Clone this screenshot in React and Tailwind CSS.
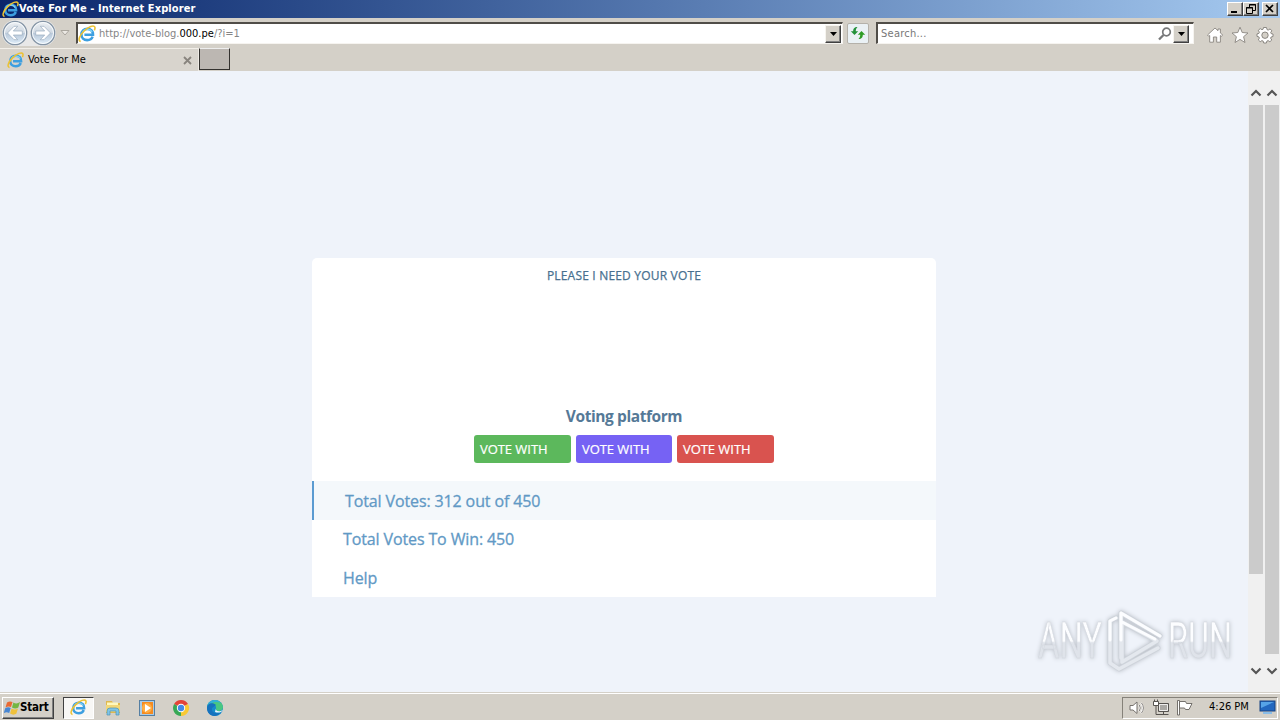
import React from 'react';

const EdgeE = ({ className }) => (
  <svg viewBox="0 0 18 18" className={className} fill="none">
    <path d="M14.6 11.6C13.7 14 11.6 15.1 9.2 15.1C5.8 15.1 3.4 12.8 3.4 9.5C3.4 6.2 5.9 3.9 9.3 3.9C12.9 3.9 15.2 6.2 15 9.8H6.4" stroke="#3d9fe0" strokeWidth="2.6" />
    <path d="M4.3 8.5C5 5.7 7 4.3 9.3 4.3C11.6 4.3 13.2 5.4 14 7" stroke="#7fd0f5" strokeWidth="1.4" />
    <path d="M2.7 16.4C-.4 15.8 1.4 10.6 5.8 6.2C10.5 1.5 15.8-.3 16.8 2C17.2 3 16.9 4.2 16.3 5.4" stroke="#ecc232" strokeWidth="1.6" />
  </svg>
);

const NavArrow = ({ flip }) => (
  <svg viewBox="0 0 26 26" className={`h-[26px] w-[26px] ${flip ? '-scale-x-100' : ''}`}>
    <defs>
      <linearGradient id="orb" x1="0" y1="0" x2="0" y2="1">
        <stop offset="0" stopColor="#eef1f4" />
        <stop offset=".48" stopColor="#cfd8e2" />
        <stop offset=".5" stopColor="#b8c7d8" />
        <stop offset="1" stopColor="#dfeefa" />
      </linearGradient>
    </defs>
    <circle cx="13" cy="13" r="11.7" fill="url(#orb)" stroke="#8494a5" strokeWidth="1.3" />
    <circle cx="13" cy="13" r="10.5" fill="none" stroke="#f8fbfd" />
    <path d="M5.5 13L12 6.3H15.7L11.3 11H20.3V15H11.3L15.7 19.7H12Z" fill="#fff" stroke="#9aacbf" strokeWidth=".7" />
  </svg>
);

const DropButton = () => (
  <div className="flex h-[18px] w-4 items-center justify-center border border-t-[#f6f4ef] border-r-[#404040] border-b-[#404040] border-l-[#f6f4ef] bg-[#d4d0c8] shadow-[inset_-1px_-1px_#808080]">
    <svg viewBox="0 0 7 4" className="h-1 w-[7px]"><path d="M0 0H7L3.5 4Z" fill="#000" /></svg>
  </div>
);

const WindowButton = ({ children }) => (
  <div className="h-[14px] w-4 border border-t-white border-r-[#404040] border-b-[#404040] border-l-white bg-[#d4d0c8] shadow-[inset_-1px_-1px_#808080]">
    <svg viewBox="0 0 14 12" className="h-3 w-[14px]" fill="none" stroke="#000">{children}</svg>
  </div>
);

const TitleBar = () => (
  <div className="flex h-[18px] items-center bg-linear-to-r from-[#0a246a] to-[#a6caf0] pr-[2px] pl-[2px]">
    <EdgeE className="h-[17px] w-[17px]" />
    <span className="font-['DejaVu_Sans_Condensed','DejaVu_Sans',sans-serif] text-[11px] leading-[18px] font-bold tracking-[0.09px] whitespace-nowrap text-white">Vote For Me - Internet Explorer</span>
    <div className="ml-auto flex">
      <WindowButton><path d="M3 9H9" strokeWidth="2" /></WindowButton>
      <WindowButton><path d="M5.5 4V1.5H11.5V7.5H9M5 2H12M2.5 4.5H8.5V10.5H2.5ZM2 5H9" /></WindowButton>
      <div className="w-[3px]" />
      <WindowButton><path d="M3 2L10 9M10 2L3 9" strokeWidth="1.7" /></WindowButton>
    </div>
  </div>
);

const AddressBar = () => (
  <div className="flex h-[30px] items-center pl-[2px]">
    <div className="flex rounded-full bg-[#e8e8e8]">
      <NavArrow />
      <div className="ml-[2px]"><NavArrow flip /></div>
    </div>
    <svg viewBox="0 0 9 6" className="ml-[4px] h-[6px] w-[10px]"><path d="M.5 .5H8.5L4.5 5Z" fill="#ece9e4" stroke="#aaa69e" /></svg>
    <div className="ml-[6px] flex h-[22px] w-[767px] items-center border border-t-2 border-l-2 border-t-[#504d48] border-r-[#f6f4f0] border-b-[#f6f4f0] border-l-[#504d48] bg-white">
      <EdgeE className="h-[18px] w-[18px]" />
      <span className="mt-[2px] ml-[3px] font-['DejaVu_Sans_Condensed','DejaVu_Sans',sans-serif] text-[11px] tracking-[0.01px] whitespace-nowrap text-[#858585]">
        http://vote-blog.<span className="text-black">000.pe</span>/?i=1
      </span>
      <div className="mr-[1px] ml-auto"><DropButton /></div>
    </div>
    <div className="ml-[4px] flex h-[21px] w-[22px] items-center justify-center rounded-[2px] border border-[#b4b1aa] bg-[#eaf1f5]">
      <svg viewBox="0 0 16 14" className="h-[14px] w-4">
        <path d="M7.5 1C4.2 1 3.2 2.7 3.2 5.2H.8L4.5 9L8.2 5.2H5.8C5.8 3.4 6.1 2.4 7.5 1Z" fill="#23913a" />
        <path d="M8.5 13C11.8 13 12.8 11.3 12.8 8.8H15.2L11.5 5L7.8 8.8H10.2C10.2 10.6 9.9 11.6 8.5 13Z" fill="#2f9c25" />
      </svg>
    </div>
    <div className="ml-[7px] flex h-[22px] w-[318px] items-center border border-t-2 border-l-2 border-t-[#504d48] border-r-[#f6f4f0] border-b-[#f6f4f0] border-l-[#504d48] bg-white pr-1">
      <span className="mt-[2px] ml-[3px] font-['DejaVu_Sans_Condensed','DejaVu_Sans',sans-serif] text-[11px] tracking-[0.25px] text-[#777]">Search...</span>
      <svg viewBox="0 0 14 14" className="mr-[1px] ml-auto h-[14px] w-[14px]" fill="none" stroke="#777879">
        <circle cx="8.5" cy="5" r="3.8" strokeWidth="1.7" /><path d="M5.5 8L1 12.5" strokeWidth="2.3" />
      </svg>
      <DropButton />
    </div>
    <div className="mt-[3px] ml-[12px] flex gap-[7px]">
      <svg viewBox="0 0 18 18" className="h-[18px] w-[18px]" fill="#fff" stroke="#89857f" strokeWidth=".9" strokeLinejoin="round">
        <path d="M1.5 9L9 2L12 4.7V3H14.4V7L16.7 9L15.3 10.3L14.4 9.5V16.2H10.7V11H7.4V16.2H3.7V9.5L2.8 10.3Z" />
      </svg>
      <svg viewBox="0 0 18 18" className="h-[18px] w-[18px]" fill="#fff" stroke="#89857f" strokeWidth=".9" strokeLinejoin="round">
        <path d="M9 1.2L11.2 6.5L17 7L12.6 10.7L14 16.5L9 13.4L4 16.5L5.4 10.7L1 7L6.8 6.5Z" />
      </svg>
      <svg viewBox="0 0 18 18" className="h-[18px] w-[18px]" fill="#fff" stroke="#817e78" strokeWidth=".9" strokeLinejoin="round">
        <path d="M7.5 1.5H10.5L11 3.6L12.2 4.1L14.1 2.9L15.8 4.8L14.7 6.5L15.1 7.6L17 8V10.5L15.1 11L14.6 12.2L15.8 14L13.9 15.7L12.1 14.6L10.9 15.1L10.4 17H7.7L7.2 15.1L5.9 14.6L4.2 15.7L2.3 13.9L3.4 12.1L2.9 10.9L1 10.4V7.9L2.9 7.4L3.4 6.2L2.3 4.4L4.2 2.6L6 3.7L7.1 3.2Z" />
        <circle cx="9" cy="9.2" r="3.2" fill="#d4d0c8" />
      </svg>
    </div>
  </div>
);

const TabStrip = () => (
  <div className="flex h-[23px] items-start">
    <div className="flex h-[23px] w-[199px] items-center border-t border-r border-t-[#f2efe9] border-r-[#eeeae4] bg-[#d8d4cd] pl-[7px]">
      <EdgeE className="h-[17px] w-[17px]" />
      <span className="mt-[1px] ml-[4px] font-['DejaVu_Sans_Condensed','DejaVu_Sans',sans-serif] text-[11px] tracking-[-0.05px] text-black">Vote For Me</span>
      <svg viewBox="0 0 9 9" className="mr-[6px] ml-auto h-[9px] w-[9px]"><path d="M1 1L8 8M8 1L1 8" stroke="#88847e" strokeWidth="1.8" /></svg>
    </div>
    <div className="h-[22px] w-[31px] border border-t-[#eee] border-r-[#33312e] border-b-[#33312e] border-l-[#33312e] bg-[#bcb7b2]" />
  </div>
);

const Chevron = ({ down }) => (
  <svg viewBox="0 0 12 8" className={`h-2 w-3 ${down ? 'rotate-180' : ''}`}>
    <path d="M1.5 6.5L6 2L10.5 6.5" fill="none" stroke="#555" strokeWidth="2.2" />
  </svg>
);

const ScrollBar = ({ thumb }) => (
  <div className="flex w-4 flex-col items-center bg-[#f0f0f0] pt-[18px] pb-[17px]">
    <Chevron />
    <div className={`mt-2 w-[14px] bg-[#cbcbcb] ${thumb}`} />
    <div className="mt-auto"><Chevron down /></div>
  </div>
);

const VoteButton = ({ color }) => (
  <button className={`h-7 rounded-[3px] pt-[2px] pl-[6px] text-left text-[13px] tracking-[-0.05px] text-white [-webkit-text-stroke:0.2px] ${color}`}>VOTE WITH</button>
);

const VoteCard = () => (
  <div className="flex h-[339px] w-[624px] flex-col rounded-t-[5px] bg-white font-['Trebuchet_MS','Open_Sans',sans-serif]">
    <div className="mt-2 text-center text-[12px] leading-[19px] tracking-[0.19px] text-[#48708f] [-webkit-text-stroke:0.25px]">PLEASE I NEED YOUR VOTE</div>
    <h1 className="mt-[120px] text-center text-[15.5px] leading-[23px] font-bold tracking-[-0.42px] text-[#557997]">Voting platform</h1>
    <div className="mt-[7px] flex h-7 justify-center gap-[5px]">
      <VoteButton color="w-[97px] bg-[#5cb85c]" />
      <VoteButton color="w-[96px] bg-[#7662f4]" />
      <VoteButton color="w-[97px] bg-[#d9534f]" />
    </div>
    <ul className="mt-[18px] text-[16px] tracking-[-0.12px] text-[#6199c5] [-webkit-text-stroke:0.3px]">
      <li className="h-[39px] border-l-2 border-[#5b9bd1] bg-[#f4f8fb] pl-[31px] leading-[41px]">Total Votes: 312 out of 450</li>
      <li className="h-[38px] pl-[31px] leading-[39px]">Total Votes To Win: 450</li>
      <li className="h-[39px] pl-[31px] leading-[40px]">Help</li>
    </ul>
  </div>
);

const Watermark = () => (
  <svg viewBox="0 0 204 68" className="absolute right-[6px] bottom-[17px] h-[68px] w-[204px] overflow-visible drop-shadow-[0_0_2px_#b8bdc5]">
    <defs>
      <linearGradient id="mark" x1="0" y1="0" x2="0" y2="1">
        <stop offset=".5" stopColor="#fcfdff" />
        <stop offset=".53" stopColor="#dfe3ea" />
      </linearGradient>
    </defs>
    <g fill="url(#mark)" stroke="#d1d5dc" strokeWidth=".5" fontFamily="Roboto, sans-serif" fontSize="50">
      <text x="0" y="51" textLength="64" lengthAdjust="spacingAndGlyphs">ANY</text>
      <text x="130" y="51" textLength="64" lengthAdjust="spacingAndGlyphs">RUN</text>
    </g>
    <g fill="none" strokeLinejoin="round" strokeLinecap="round">
      <path d="M78 11L72 14V56L81 62L120 41M83 51V6L122 29M84 15L119 34L84 55V15" stroke="#ced3da" strokeWidth="5" />
      <path d="M78 11L72 14V56L81 62L120 41M83 51V6L122 29M84 15L119 34L84 55V15" stroke="#e4e8ee" strokeWidth="3.5" />
      <path d="M83 33V6L122 29M84 15L117 32M72 33V14L78 11" stroke="#fcfdff" strokeWidth="3" />
    </g>
  </svg>
);

const Taskbar = () => (
  <div className="flex h-7 items-center border-t border-[#d4d0c8] bg-[#d4d0c8] pt-[2px] shadow-[inset_0_1px_#fff]">
    <div className="ml-[2px] flex h-[22px] w-[52px] items-center border border-t-white border-r-[#404040] border-b-[#404040] border-l-white pl-[1px] shadow-[inset_-1px_-1px_#808080]">
      <svg viewBox="0 0 17 16" className="h-4 w-[17px]">
        <path d="M3 2.5C5 1 7 1.2 8.5 2L7 7C5.3 6.2 3.5 6.2 1.5 7.5Z" fill="#e96932" />
        <path d="M9.4 2.5C11.5 3.8 13.7 3.7 16 2L14.3 7.5C12.3 8.8 10 8.7 8 7.5Z" fill="#74b642" />
        <path d="M1.2 8.3C3.2 7 5 7.1 6.7 8L5.2 13C3.4 12 1.7 12-.2 13Z" fill="#4786d3" />
        <path d="M7.6 8.5C9.8 9.8 12 9.8 14 8.5L12.3 13.8C10.4 15 8.1 14.9 6.1 13.5Z" fill="#efc13b" />
      </svg>
      <span className="-ml-[1px] font-['DejaVu_Sans_Condensed','DejaVu_Sans',sans-serif] text-[11.5px] font-bold tracking-[-0.2px] text-black">Start</span>
    </div>
    <div className="ml-[9px] flex h-[22px] w-[31px] items-center justify-center border border-t-[#404040] border-r-white border-b-white border-l-[#404040] bg-[#f8f7f5]"><EdgeE className="h-[17px] w-[17px]" /></div>
    <svg viewBox="0 0 18 18" className="ml-[10px] h-[18px] w-[18px]">
      <path d="M2 2H8L9 4H16V14H2Z" fill="#dfb84f" /><path d="M3 3.5H14V7H3Z" fill="#fff8bd" /><path d="M2 6H16V13H2Z" fill="#f2d779" />
      <path d="M3 16V12Q3 9 6 9H12Q15 9 15 12V16H12V12H6V16Z" fill="#7fc4e6" stroke="#4d93b5" strokeWidth=".7" />
    </svg>
    <svg viewBox="0 0 18 18" className="ml-4 h-[18px] w-[18px]">
      <rect x="1.5" y="1.5" width="15" height="15" fill="#aacce6" stroke="#557fa3" /><rect x="4" y="3" width="11" height="12" fill="#f58b20" /><circle cx="9" cy="9" r="5" fill="#ffad42" /><path d="M7 5L13 9L7 13Z" fill="#fff" />
    </svg>
    <svg viewBox="0 0 18 18" className="ml-4 h-[18px] w-[18px]">
      <path d="M9 9L2.1 5A8 8 0 0 1 16 5Z" fill="#e34338" /><path d="M9 9L16 5A8 8 0 0 1 9 17Z" fill="#f9c934" /><path d="M9 9V17A8 8 0 0 1 2.1 5Z" fill="#37a856" />
      <circle cx="9" cy="9" r="4.2" fill="#fff" /><circle cx="9" cy="9" r="3.2" fill="#4389e7" />
    </svg>
    <svg viewBox="0 0 18 18" className="ml-4 h-[18px] w-[18px]">
      <circle cx="9" cy="9" r="8" fill="#168acb" /><path d="M1 8C2-1 16-1 17 8C17 13 10 13 10 10C11 5 5 3 1 8Z" fill="#49c782" />
      <path d="M1 8C2 0 11-1 15 4C10 2 5 3 1 8Z" fill="#32afd8" />
      <path d="M1 9C1 4 7 3 10 6L6 9C5 13 10 16 15 13C10 20 1 17 1 9Z" fill="#1672bd" /><path d="M10 9C9 11 12 14 17 11C15 14 12 14 9 13Z" fill="#eef8fc" />
    </svg>
    <div className="mr-[2px] ml-auto flex h-[22px] w-[156px] items-center border border-t-[#858179] border-r-white border-b-white border-l-[#858179] pl-[5px]">
      <svg viewBox="0 0 18 18" className="h-[18px] w-[18px]" fill="none" stroke="#77736e">
        <path d="M2 6.5H5L9 3V14.5L5 11H2Z" fill="#fff" /><path d="M11 6Q13 9 11 12M13 4Q17 9 13 14" stroke="#fff" strokeWidth="2" /><path d="M11.3 6Q13.3 9 11.3 12M13.5 4Q17.3 9 13.5 14" strokeWidth=".9" />
      </svg>
      <svg viewBox="0 0 18 18" className="ml-[6px] h-[18px] w-[18px]" fill="none" stroke="#56534f">
        <path d="M6.5 4.5H16.5V12.5H6.5Z" fill="#aaa8a4" /><path d="M7.5 5.5H15.5V11.5H7.5Z" stroke="#fff" strokeWidth=".8" /><path d="M7 15.5H16.5M11.5 13V15" />
        <path d="M1.5 2.5H6.5V6.5H1.5Z" fill="#fff" /><path d="M2.5 2.5V.5M5.5 2.5V.5M4 7V15.5H8" />
      </svg>
      <svg viewBox="0 0 18 18" className="ml-[6px] h-[18px] w-[18px]" fill="#fff" stroke="#66635f" strokeWidth=".9">
        <path d="M1.5 1.5H3.5V16H1.5Z" /><path d="M3.5 2.5H9.5L10.5 4.5H16L13 10.5H9.5L8.5 9H3.5Z" />
      </svg>
      <span className="ml-[15px] font-['DejaVu_Sans_Condensed','DejaVu_Sans',sans-serif] text-[11px] whitespace-nowrap text-black">4:26 PM</span>
      <svg viewBox="0 0 17 15" className="mr-[1px] ml-auto h-[15px] w-[17px]"><rect x="1" y="1" width="15" height="10" fill="#2267bf" stroke="#174381" /><path d="M2 2H15L2 8Z" fill="#56a3e7" /><path d="M4 13H13" stroke="#89bde8" strokeWidth="2" /></svg>
    </div>
  </div>
);

export default function App() {
  return (
    <div className="flex h-[720px] w-[1280px] flex-col overflow-hidden bg-[#d4d0c8]">
      <TitleBar />
      <AddressBar />
      <TabStrip />
      <div className="flex h-[621px] bg-[#eff3fa]">
        <main className="relative flex w-[1248px] justify-center pt-[187px]">
          <VoteCard />
          <Watermark />
        </main>
        <ScrollBar thumb="h-[469px]" />
        <ScrollBar thumb="h-[549px]" />
      </div>
      <Taskbar />
    </div>
  );
}
